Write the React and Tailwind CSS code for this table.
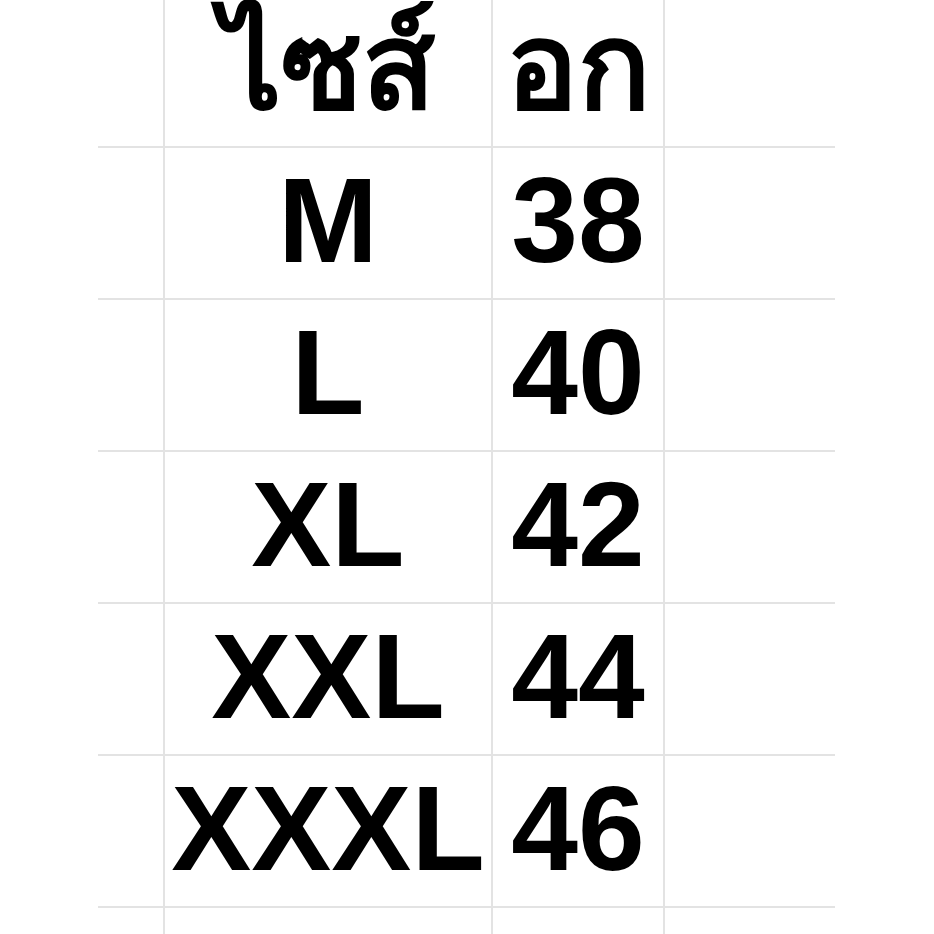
const rows = [
  { size: 'M', chest: '38' },
  { size: 'L', chest: '40' },
  { size: 'XL', chest: '42' },
  { size: 'XXL', chest: '44' },
  { size: 'XXXL', chest: '46' },
]

function Row({ a, b, h, pad = 'pb-[6px]' }) {
  return (
    <div className={`flex ${h}`}>
      <div className="w-[67px] shrink-0 border-b-2 border-r-2 border-[#e3e3e3]" />
      <div className={`w-[328px] shrink-0 flex items-center justify-center border-b-2 border-r-2 border-[#e3e3e3] ${pad}`}>
        {a}
      </div>
      <div className={`w-[172px] shrink-0 flex items-center justify-center border-b-2 border-r-2 border-[#e3e3e3] ${pad}`}>
        {b}
      </div>
      <div className="w-[170px] shrink-0 border-b-2 border-[#e3e3e3]" />
    </div>
  )
}

export default function App() {
  return (
    <div className="w-[934px] h-[934px] overflow-hidden bg-white text-black font-bold text-[120px] leading-none font-['Liberation_Sans',Tahoma,sans-serif]">
      <div className="ml-[98px] flex flex-col">
        <Row a="ไซส์" b="อก" h="h-[148px]" pad="pb-[14px]" />
        {rows.map((r) => (
          <Row key={r.size} a={r.size} b={r.chest} h="h-[152px]" />
        ))}
        <Row a="" b="" h="h-[152px]" />
      </div>
    </div>
  )
}
